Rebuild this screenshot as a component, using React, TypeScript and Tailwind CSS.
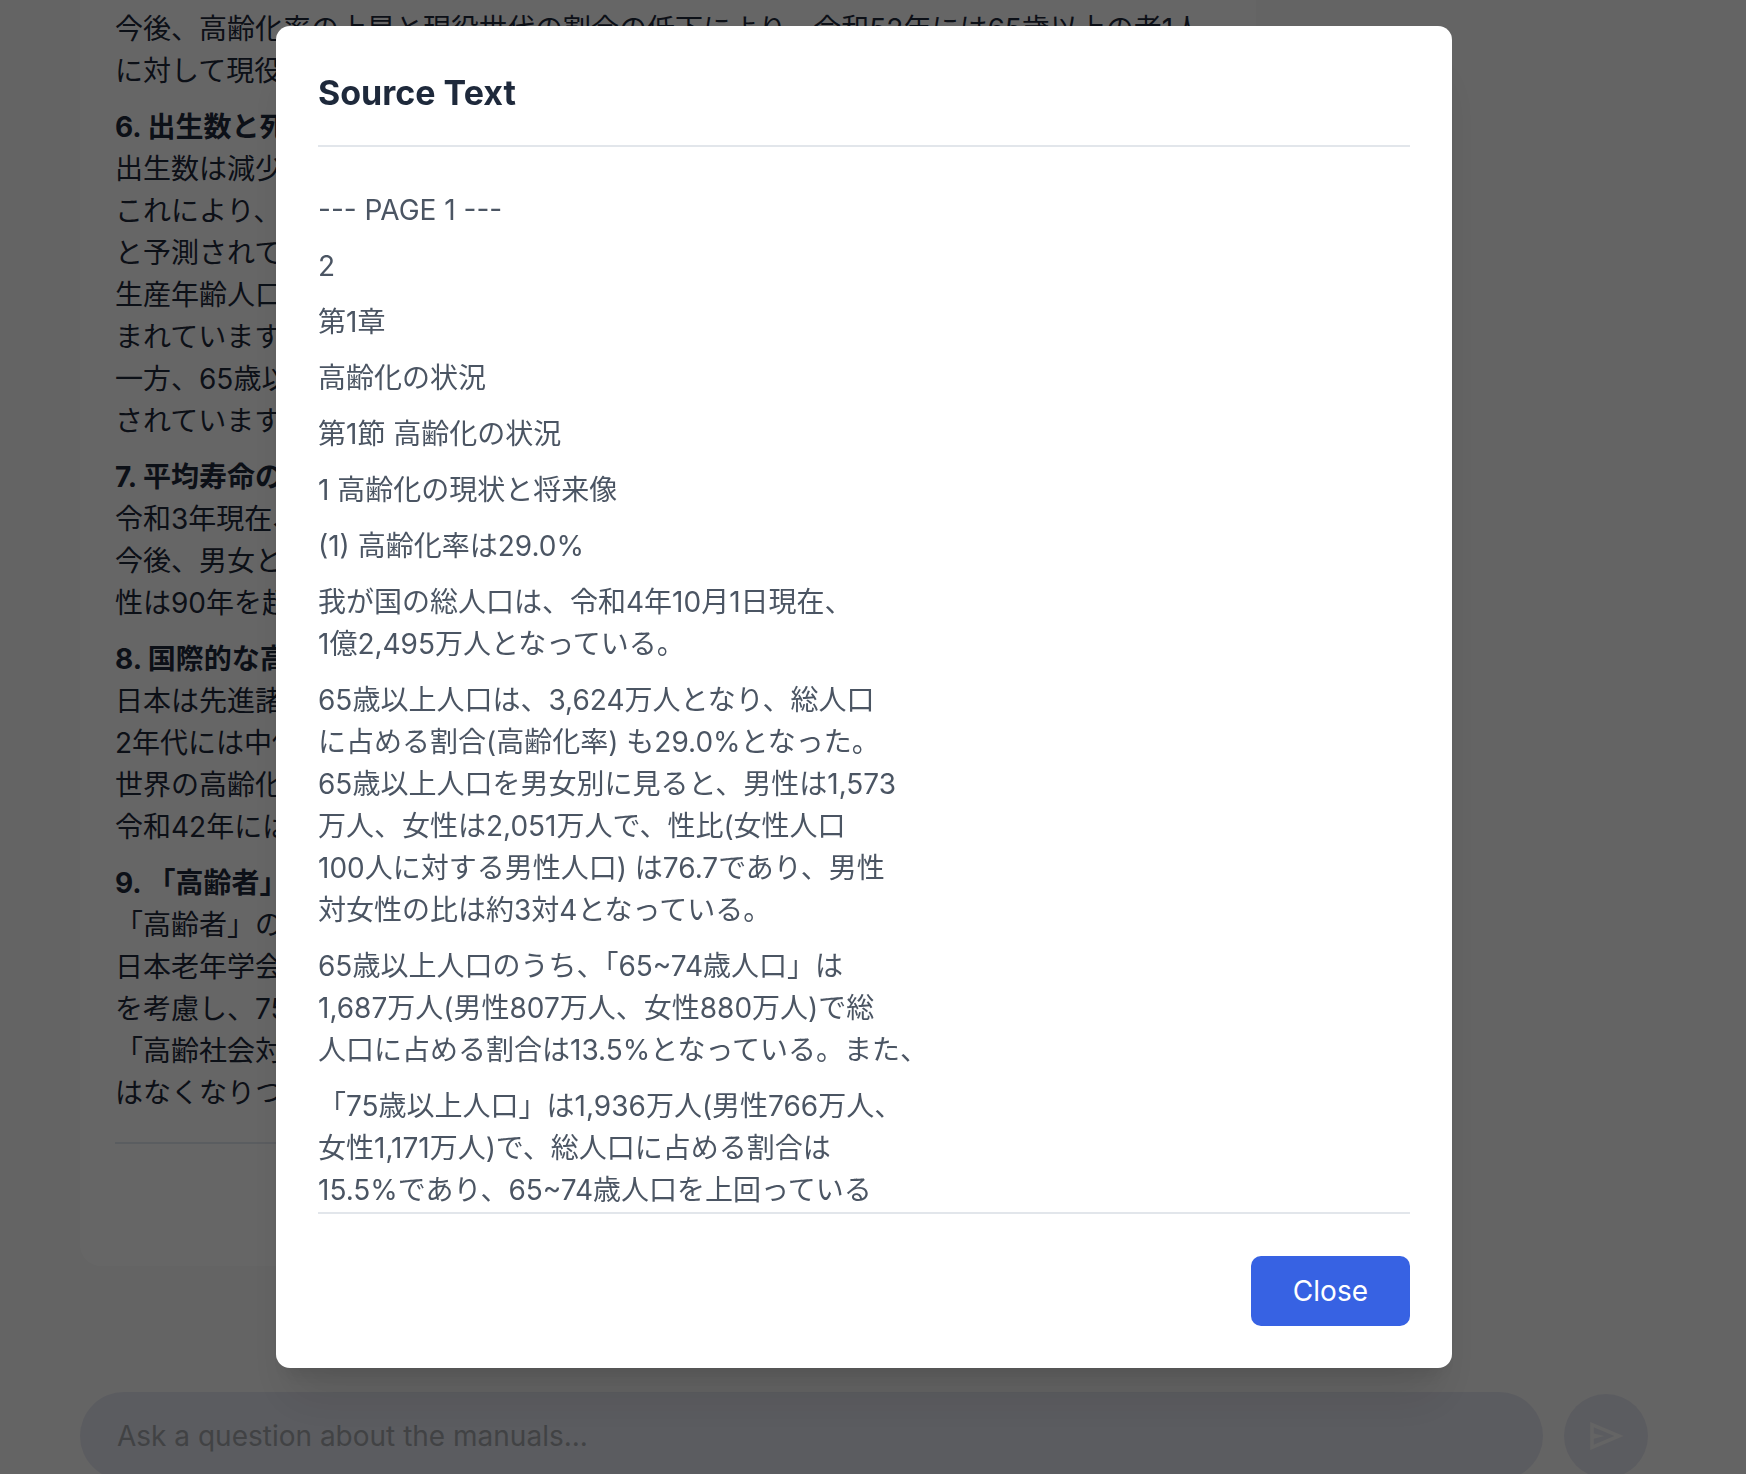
import React, { useState } from "react";

const answerSections = [
  {
    title: "",
    lines: [
      "今後、高齢化率の上昇と現役世代の割合の低下により、令和52年には65歳以上の者1人",
      "に対して現役",
    ],
  },
  {
    title: "6. 出生数と死",
    lines: [
      "出生数は減少",
      "これにより、",
      "と予測されて",
      "生産年齢人口",
      "まれています",
      "一方、65歳以",
      "されています",
    ],
  },
  {
    title: "7. 平均寿命の",
    lines: ["令和3年現在、", "今後、男女と", "性は90年を超"],
  },
  {
    title: "8. 国際的な高",
    lines: ["日本は先進諸", "2年代には中位", "世界の高齢化", "令和42年には"],
  },
  {
    title: "9. 「高齢者」",
    lines: [
      "「高齢者」の",
      "日本老年学会",
      "を考慮し、75",
      "「高齢社会対",
      "はなくなりつ",
    ],
  },
];

const sourceParagraphs = [
  ["--- PAGE 1 ---"],
  ["2"],
  ["第1章"],
  ["高齢化の状況"],
  ["第1節 高齢化の状況"],
  ["1 高齢化の現状と将来像"],
  ["(1) 高齢化率は29.0%"],
  ["我が国の総人口は、令和4年10月1日現在、", "1億2,495万人となっている。"],
  [
    "65歳以上人口は、3,624万人となり、総人口",
    "に占める割合(高齢化率) も29.0%となった。",
    "65歳以上人口を男女別に見ると、男性は1,573",
    "万人、女性は2,051万人で、性比(女性人口",
    "100人に対する男性人口) は76.7であり、男性",
    "対女性の比は約3対4となっている。",
  ],
  [
    "65歳以上人口のうち、「65~74歳人口」は",
    "1,687万人(男性807万人、女性880万人)で総",
    "人口に占める割合は13.5%となっている。また、",
  ],
  [
    "「75歳以上人口」は1,936万人(男性766万人、",
    "女性1,171万人)で、総人口に占める割合は",
    "15.5%であり、65~74歳人口を上回っている",
  ],
];

const SendIcon: React.FC = () => (
  <svg viewBox="0 0 24 24" className="h-[42px] w-[42px]" fill="currentColor">
    <path d="M3 20V4l19 8-19 8Zm2-3 11.850-5L5 7v3.500l6 1.500-6 1.500V17Z" />
  </svg>
);

const AnswerCard: React.FC = () => (
  <article className="w-3/4 rounded-b-[21px] bg-white px-[35px] pt-2 text-[#1e293b]">
    <div className="flex flex-col gap-[14px]">
      {answerSections.map((section, index) => (
        <div key={index}>
          {section.title && <h3 className="font-bold">{section.title}</h3>}
          {section.lines.map((line) => (
            <p key={line} className="whitespace-nowrap">
              {line}
            </p>
          ))}
        </div>
      ))}
    </div>
    <div className="mt-7 h-[124px] border-t-2 border-[#e2e8f0]" />
  </article>
);

const QuestionForm: React.FC = () => (
  <form
    className="flex items-center gap-[21px]"
    onSubmit={(e) => e.preventDefault()}
  >
    <input
      type="text"
      aria-label="Ask a question about the manuals"
      placeholder="Ask a question about the manuals..."
      className="h-[88px] min-w-0 flex-1 rounded-full bg-[#e4e6f0] px-[37px] placeholder:text-[#a3a6ab]"
    />
    <button
      type="submit"
      aria-label="Send"
      className="flex h-[84px] w-[84px] items-center justify-center rounded-full bg-[#e4e6f0] text-[#fafafa]"
    >
      <SendIcon />
    </button>
  </form>
);

const SourceModal: React.FC<{ onClose: () => void }> = ({ onClose }) => (
  <div className="fixed inset-0 flex justify-center bg-black/60 pt-[26px] pr-[18px] pb-[106px]">
    <div
      role="dialog"
      aria-modal="true"
      aria-labelledby="source-title"
      className="flex w-full max-w-[1176px] flex-col rounded-[14px] bg-white p-[42px] shadow-[0_40px_50px_-10px_rgba(0,0,0,0.1),0_16px_20px_-10px_rgba(0,0,0,0.1)]"
    >
      <header className="border-b-2 border-[#e2e6eb] pb-7">
        <h2
          id="source-title"
          className="text-[34px] leading-[49px] font-bold text-[#1e293b]"
        >
          Source Text
        </h2>
      </header>

      <div className="flex min-h-0 flex-1 flex-col gap-[14px] overflow-hidden pt-[42px] text-[#4b5563]">
        {sourceParagraphs.map((lines, index) => (
          <p key={index} className="shrink-0">
            {lines.map((line) => (
              <span key={line} className="block">
                {line}
              </span>
            ))}
          </p>
        ))}
      </div>

      <footer className="flex justify-end border-t-2 border-[#e2e6eb] pt-[42px]">
        <button
          type="button"
          onClick={onClose}
          className="rounded-[10px] bg-[#3762e3] px-[42px] py-[14px] text-white"
        >
          Close
        </button>
      </footer>
    </div>
  </div>
);

const App: React.FC = () => {
  const [isModalOpen, setIsModalOpen] = useState(true);

  return (
    <div
      lang="ja"
      className="h-screen overflow-hidden bg-[#fafafa] pr-[18px] font-['Inter','Noto_Sans_CJK_JP',sans-serif] text-[28px] leading-[42px]"
    >
      <main className="flex flex-col gap-[126px] px-20">
        <AnswerCard />
        <QuestionForm />
      </main>

      {isModalOpen && <SourceModal onClose={() => setIsModalOpen(false)} />}
    </div>
  );
};

export default App;
